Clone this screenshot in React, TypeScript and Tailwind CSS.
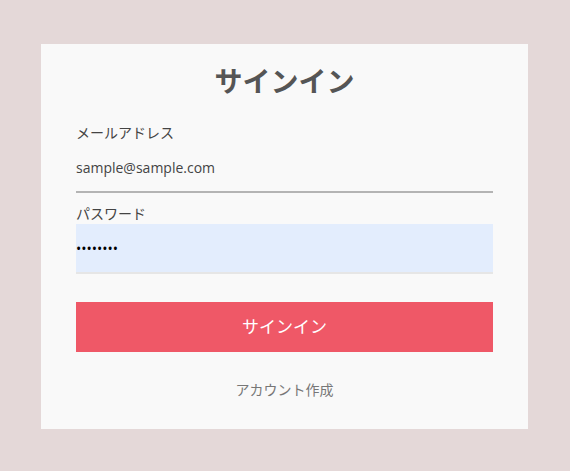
import React from "react";

const font = { fontFamily: '"Open Sans", "Noto Sans CJK JP", sans-serif' };

export default function App() {
  return (
    <div className="h-screen w-full bg-[#e4d8d8] pt-[44px] pl-[41px]" style={font}>
      <div className="w-[487px] h-[385px] bg-[#f9f9f9] px-[35px] pt-[16px]">
        <h1 className="text-center text-[28px] leading-[42px] font-bold text-[#555555]">
          サインイン
        </h1>
        <div className="mt-[20px]">
          <label className="block text-[14px] leading-[21px] text-[#444444]">
            メールアドレス
          </label>
          <input
            type="email"
            readOnly
            value="sample@sample.com"
            className="block w-full h-[50px] bg-transparent border-b-2 border-[#b4b4b4] text-[14px] text-[#444444] outline-none"
          />
        </div>
        <div className="mt-[10px]">
          <label className="block text-[14px] leading-[21px] text-[#444444]">
            パスワード
          </label>
          <input
            type="password"
            readOnly
            value="password"
            className="block w-full h-[50px] bg-[#e3edfd] border-b-2 border-[#e6e6e6] text-[14px] text-black outline-none"
          />
        </div>
        <button className="mt-[28px] w-full h-[50px] bg-[#ef5867] text-white text-[17px]">
          サインイン
        </button>
        <div className="mt-[27px] text-center text-[14px] leading-[21px] text-[#777777]">
          アカウント作成
        </div>
      </div>
    </div>
  );
}
